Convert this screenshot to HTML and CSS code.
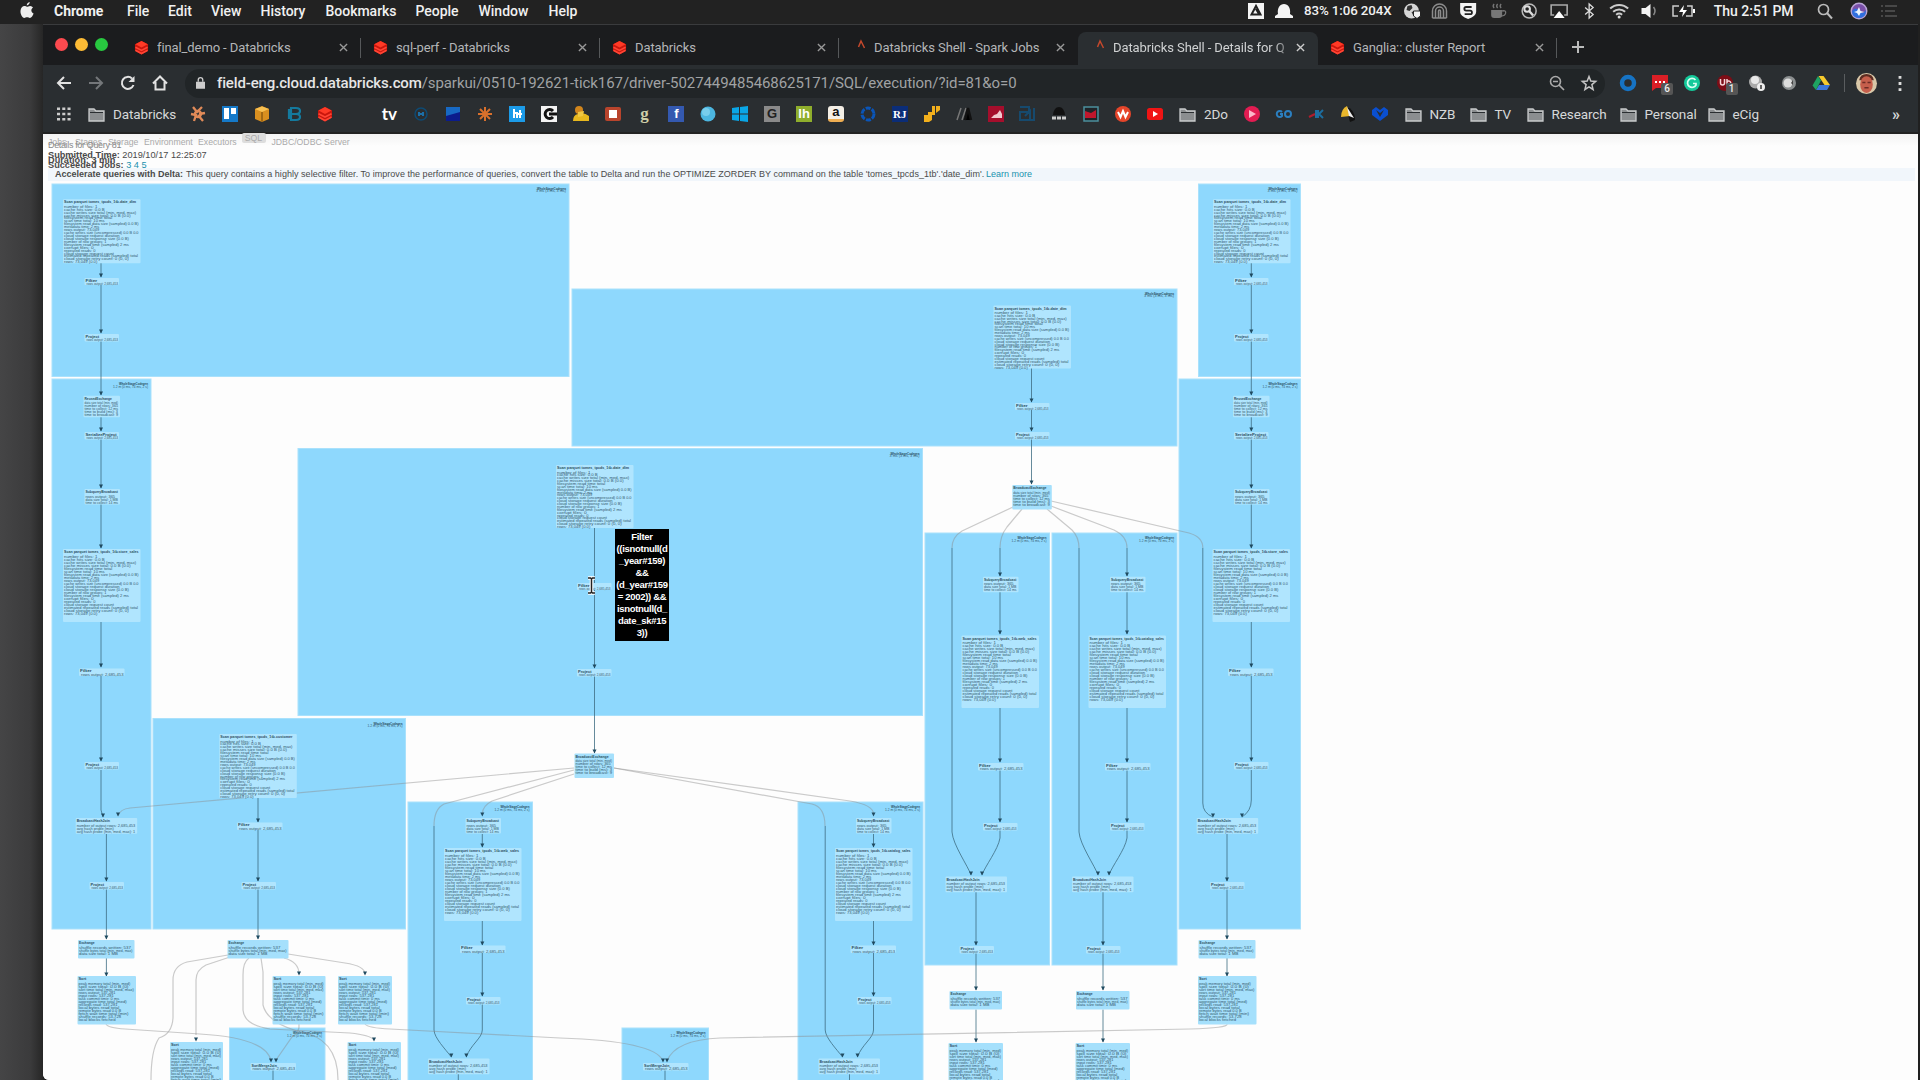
FILE: index.html
```html
<!DOCTYPE html>
<html lang="en">
<head>
<meta charset="utf-8">
<title>Databricks Shell - Details for Query 81</title>
<link rel="stylesheet" href="styles.css">
</head>
<body>
<svg class="defs" width="0" height="0" aria-hidden="true">
  <symbol id="bricks" viewBox="0 0 16 16"><path fill="#c9160d" d="M1 4.500 8 1l7 3.500v7L8 15.500l-7-4z"/><path fill="#ff3a26" d="M1.500 4.500 8 1l6.500 3.500L8 8z"/><path fill="none" stroke="#ff4534" stroke-width="1.800" d="m1.500 7.700 6.500 3.400 6.500-3.400M1.500 11 8 14.500l6.500-3.500"/></symbol>
  <symbol id="folder" viewBox="0 0 17 15"><path fill="#8b8e90" stroke="#c9cbcc" stroke-width="1.300" d="M1 2h5l2 2h8v10H1z"/><path stroke="#2a2e31" stroke-width="1" d="M2 5.500h13"/></symbol>
  <symbol id="close" viewBox="0 0 10 10"><path d="m1 1 8 8m0-8-8 8" fill="none" stroke="currentColor" stroke-width="1.500"/></symbol>
  <symbol id="spark" viewBox="0 0 10 10"><path d="m1.500 7 2.500-6 3.500 7" fill="none" stroke="#c4482c" stroke-width="1.500"/></symbol>
</svg>

<header class="menubar">
  <svg class="apple" viewBox="0 0 14 17"><path fill="#eee" d="M9.700 0c.1 1.700-1.200 3.300-2.900 3.400C6.600 1.800 8.100.2 9.700 0zM7 4.700c.8 0 1.700-.8 3.200-.8 1.200.1 2.200.6 2.800 1.500-2.400 1.600-2.100 4.900.6 6-.7 1.900-2.100 4.500-3.700 4.500-1.100 0-1.500-.7-2.800-.7s-1.800.7-2.800.7C2.200 15.900.2 11.900.5 8.800.8 5.900 2.500 4.100 4.500 4.100c1 0 1.700.6 2.500.6z"/></svg>
  <nav class="menus"><b>Chrome</b><span>File</span><span>Edit</span><span>View</span><span>History</span><span>Bookmarks</span><span>People</span><span>Window</span><span>Help</span></nav>
  <div class="status">
    <svg class="w-drive" viewBox="0 0 16 16"><path fill="#f4f4f4" d="M0 0h16v16H0z"/><path fill="none" stroke="#222" stroke-width="2" d="M8 3 3.500 11.500h9zM8 6l3 5"/></svg>
    <svg class="w-hat" viewBox="0 0 18 16"><path fill="#f4f4f4" d="M3 11C2 5 5 1 9 1s7 4 6 10l3 2v2H0v-2z"/></svg>
    <span class="stat">83% 1:06 204X</span>
    <svg class="w-27" viewBox="0 0 18 16"><circle cx="8" cy="8" r="7.500" fill="#d6d6d6"/><path fill="#333" d="m4 3 4-1 1 3-3 3-3-1zM8 9l4-1-2 5z"/><path fill="#f2f2f2" stroke="#222" d="M10 8h7v5l-3.500 2.500L10 13z"/></svg>
    <svg class="w-27" viewBox="0 0 18 16"><path fill="none" stroke="#8c8c8c" stroke-width="1.500" d="M2 15V8a7 7 0 0 1 14 0v7M5 15V8a4 4 0 0 1 8 0v7M8 15V8a1 1 0 0 1 2 0v7M2 15h14"/></svg>
    <svg class="w-30" viewBox="0 0 18 16"><path fill="#f4f4f4" d="M1 0h16v9q0 4-8 7-8-3-8-7z"/><path fill="none" stroke="#222" stroke-width="1.800" d="M12.500 4H7a1.800 1.800 0 0 0 0 3.600h4a1.800 1.800 0 0 1 0 3.600H5.500"/></svg>
    <svg class="w-30" viewBox="0 0 18 16"><path fill="#777" d="M2 7h11v5q0 3-3 3H5q-3 0-3-3z"/><path fill="none" stroke="#777" stroke-width="1.300" d="M13 8q4-1 3.500 2T12 13M5 5q-2-2 0-4M8.500 5q-2-2 0-4M12 5q-2-2 0-4"/></svg>
    <svg class="w-30" viewBox="0 0 18 16"><circle cx="9" cy="8" r="7" fill="none" stroke="#bbb" stroke-width="1.500"/><circle cx="7" cy="6" r="2.800" fill="none" stroke="#ddd" stroke-width="2"/><path stroke="#ddd" stroke-width="2.400" d="m9 8 4 4.500"/></svg>
    <svg class="w-30" viewBox="0 0 18 16"><path fill="none" stroke="#aaa" stroke-width="1.600" d="M4 12H1V2h16v10h-3"/><path fill="#fff" d="m9 8 5.500 7h-11z"/></svg>
    <svg class="w-30" viewBox="0 0 18 16"><path fill="none" stroke="#ddd" stroke-width="1.300" d="m5 4.500 8 7-4 3.500V1l4 3.500-8 7"/></svg>
    <svg class="w-30 wide" viewBox="0 0 20 16"><path fill="none" stroke="#ccc" stroke-width="2" d="M1 5.500a13 13 0 0 1 18 0M4 8.700a9 9 0 0 1 12 0M7 11.700a5 5 0 0 1 6 0"/><circle cx="10" cy="14" r="1.500" fill="#ddd"/></svg>
    <svg class="w-27" viewBox="0 0 18 16"><path fill="#f4f4f4" d="M2 5h4l5-4v14l-5-4H2z"/><path fill="none" stroke="#888" stroke-width="1.500" d="M14 4q3 4 0 8"/></svg>
    <svg class="w-batt" viewBox="0 0 24 16"><path fill="none" stroke="#ccc" stroke-width="1.500" d="M8 3H2v10h5M16 3h5v10h-6"/><path fill="#fff" d="m13 2-5 7h4l-1 5 5-7h-4zM22 6h2v4h-2z"/></svg>
    <span class="clock">Thu 2:51 PM</span>
    <svg class="w-find" viewBox="0 0 18 16"><circle cx="7.500" cy="6.500" r="5" fill="none" stroke="#bbb" stroke-width="1.700"/><path stroke="#bbb" stroke-width="2" d="m11 10 5 5.500"/></svg>
    <svg class="w-siri" viewBox="0 0 18 16"><circle cx="9" cy="8" r="8.500" fill="#b9a6d6"/><circle cx="9" cy="8" r="7" fill="#7a4fa8"/><path fill="#2f6fe0" d="M2 8q4-5 7 0t7-1q0 8-7 8t-7-7z"/><path fill="#e9f4ff" d="m9 4 1.500 4 4 1-4 1-1.500 3-2-3-3-1 3-1z"/></svg>
    <svg class="w-list" viewBox="0 0 18 16"><path stroke="#555" stroke-width="1.700" d="M1 3h2m2 0h12M1 8h2m2 0h10M1 13h2m2 0h12"/></svg>
  </div>
</header>

<main class="window">
  <div class="tabs">
    <div class="lights"><i class="red"></i><i class="amber"></i><i class="green"></i></div>
    <div class="tab"><svg class="fav"><use href="#bricks"/></svg><span>final_demo - Databricks</span><svg class="x"><use href="#close"/></svg></div>
    <div class="tab"><svg class="fav"><use href="#bricks"/></svg><span>sql-perf - Databricks</span><svg class="x"><use href="#close"/></svg></div>
    <div class="tab"><svg class="fav"><use href="#bricks"/></svg><span>Databricks</span><svg class="x"><use href="#close"/></svg></div>
    <div class="tab last"><svg class="fav sp"><use href="#spark"/></svg><span>Databricks Shell - Spark Jobs</span><svg class="x"><use href="#close"/></svg></div>
    <div class="tab active"><svg class="fav sp"><use href="#spark"/></svg><span class="fade">Databricks Shell - Details for Q</span><svg class="x"><use href="#close"/></svg></div>
    <div class="tab"><svg class="fav"><use href="#bricks"/></svg><span>Ganglia:: cluster Report</span><svg class="x"><use href="#close"/></svg></div>
    <svg class="plus" viewBox="0 0 12 12"><path stroke="#bbb" stroke-width="2" d="M6 0v12M0 6h12"/></svg>
  </div>

  <div class="toolbar">
    <div class="navs">
      <svg viewBox="0 0 16 16"><path fill="none" stroke="#e2e2e2" stroke-width="2" d="M15 8H2m6-6L2 8l6 6"/></svg>
      <svg viewBox="0 0 16 16"><path fill="none" stroke="#74777a" stroke-width="2" d="M1 8h13M8 2l6 6-6 6"/></svg>
      <svg viewBox="0 0 16 16"><path fill="none" stroke="#e2e2e2" stroke-width="2" d="M13.500 10A6 6 0 1 1 12 3.500"/><path fill="#e2e2e2" d="M14.500 1v6h-6z"/></svg>
      <svg viewBox="0 0 16 16"><path fill="none" stroke="#e2e2e2" stroke-width="2" d="M1 8.500 8 1.500l7 7M3.500 7v7.500h9V7"/></svg>
    </div>
    <div class="address">
      <svg class="lock" viewBox="0 0 10 13"><path fill="#ccc" d="M0 5h10v8H0z"/><path fill="none" stroke="#ccc" stroke-width="1.500" d="M2.500 5V3a2.500 2.500 0 0 1 5 0v2"/></svg>
      <span class="url"><b>field-eng.cloud.databricks.com</b><span class="path">/sparkui/0510-192621-tick167/driver-5027449485468625171/SQL/execution/?id=81&amp;o=0</span></span>
      <svg class="act" viewBox="0 0 16 16"><circle cx="6.500" cy="6.500" r="5" fill="none" stroke="#aaa" stroke-width="1.600"/><path stroke="#aaa" stroke-width="1.700" d="m10 10 5 5M4 6.500h5"/></svg>
      <svg class="act" viewBox="0 0 16 16"><path fill="none" stroke="#c4c4c4" stroke-width="1.500" d="m8 1.500 1.800 4.600 4.900.3-3.800 3.200 1.200 4.900L8 11.800l-4.100 2.700 1.200-4.900L1.300 6.400l4.900-.3z"/></svg>
    </div>
    <div class="exts">
      <svg viewBox="0 0 18 18"><circle cx="9" cy="9" r="6" fill="none" stroke="#1673c4" stroke-width="4.500"/></svg>
      <span class="ext"><svg viewBox="0 0 18 18"><path fill="#da1f26" d="M1 1h16v13H5l-4 3z"/><path stroke="#fff" stroke-width="2" stroke-dasharray="2 2" d="M4 8h10"/></svg><em>6</em></span>
      <svg viewBox="0 0 18 18"><circle cx="9" cy="9" r="8" fill="#14c99a"/><path fill="none" stroke="#d8fff2" stroke-width="1.700" d="M12.500 6A4.500 4.500 0 1 0 13 11V9.500h-3"/></svg>
      <span class="ext"><svg viewBox="0 0 18 18"><circle cx="9" cy="9" r="8" fill="#7d0d16"/><path fill="none" stroke="#f5d6d8" stroke-width="1.500" d="M4.500 5v4q0 2 2 2t2-2V5M11 5v6m0-3a2 2 0 1 1 0 2"/></svg><em>1</em></span>
      <svg viewBox="0 0 18 18"><circle cx="7.500" cy="8" r="6.500" fill="#aaa"/><circle cx="7" cy="6" r="4" fill="#e8e8e8"/><circle cx="13" cy="13" r="4" fill="#eee"/><path stroke="#333" stroke-width="1.500" d="M13 11v4"/></svg>
      <svg viewBox="0 0 18 18"><circle cx="9" cy="9" r="7" fill="#8b8f90"/><circle cx="8" cy="9" r="4.500" fill="#ddd"/><path fill="#444" d="m11 9 2-3v5z"/></svg>
      <svg viewBox="0 0 18 18"><path fill="#3b77db" d="M4 16h11l3-5H7z"/><path fill="#f7ca2d" d="M6.500 2h5L18 11h-5.500z"/><path fill="#1ea362" d="m6 2 3 4.500L4 16l-3.500-4.500z"/></svg>
      <i class="sep"></i>
      <svg class="avatar" viewBox="0 0 20 20"><circle cx="10" cy="10" r="10" fill="#d8c7a8"/><path fill="#5d2c22" d="M3 7q1-6 7-6t7 6z"/><ellipse cx="10" cy="11" rx="6" ry="8" fill="#c65f4c"/><path stroke="#6e2c25" stroke-width="1.500" d="M6 9h3m2 0h3M8 14h4"/></svg>
      <svg class="dots" viewBox="0 0 4 18"><path stroke="#ddd" stroke-width="3" stroke-dasharray="3 3.500" d="M2 1v16"/></svg>
    </div>
  </div>

  <div class="bookmarks">
    <span class="bm apps"><svg viewBox="0 0 16 16"><path stroke="#ccc" stroke-width="3" stroke-dasharray="3.500 2.500" d="M0 2h16M0 8h16M0 14h16"/></svg></span>
    <span class="dir d0"><svg><use href="#folder"/></svg>Databricks</span>
    <span class="bm"><svg viewBox="0 0 16 16"><g fill="none" stroke="#e08a58" stroke-width="2.300"><path d="m3 1 4 5 5-5M1 8l5 1-2 6M8 9l5 6M15 7l-6 1"/><circle cx="8" cy="8" r="3"/></g></svg></span>
    <span class="bm"><svg viewBox="0 0 16 16"><path fill="#1579c8" d="M0 0h16v16H0z"/><path fill="#fff" d="M2 2h5v11H2zm7 0h5v6H9z"/></svg></span>
    <span class="bm"><svg viewBox="0 0 16 16"><path fill="#d98f1f" d="m1 3 7-3 7 3v10l-7 3-7-3z"/><path fill="#f7c052" d="m1 3 7-2.500L15 3 8 6z"/><path stroke="#6b4308" d="M8 6v9.500"/></svg></span>
    <span class="bm"><svg viewBox="0 0 16 16"><path fill="none" stroke="#147a9e" stroke-width="2.200" d="M5 2h5q4 0 4 3t-4 3q4 0 4 3t-4 3H5zM6 8h4M3 3v10"/></svg></span>
    <span class="bm"><svg><use href="#bricks"/></svg></span>
    <span class="bm"></span>
    <span class="bm"><b class="tv">tv</b></span>
    <span class="bm"><svg viewBox="0 0 16 16"><circle cx="8" cy="8" r="6" fill="none" stroke="#0e4a73" stroke-width="1.500"/><path stroke="#1c6fa8" stroke-width="2" d="M6 6v4m4-4v4M6 8h4"/></svg></span>
    <span class="bm"><svg viewBox="0 0 16 16"><path fill="#0b1c8c" d="M1 1h14v14H1z"/><path fill="#1769c4" d="M1 1h14v5L1 10z"/></svg></span>
    <span class="bm"><svg viewBox="0 0 16 16"><path stroke="#d9702c" stroke-width="2" d="M8 1v14M1 8h14M3 3l10 10m0-10L3 13"/></svg></span>
    <span class="bm"><svg viewBox="0 0 16 16"><path fill="#1c9be8" d="M0 0h16v16H0z"/><path fill="none" stroke="#fff" stroke-width="2" d="M5 3v9M5 7h3v5M11 4v8M8 8h5"/></svg></span>
    <span class="bm"><svg viewBox="0 0 16 16"><path fill="#f4f4f4" d="M0 0h16v16H0z"/><path fill="none" stroke="#111" stroke-width="3" d="M12 5A4.500 4.500 0 1 0 12 11M8 8h8"/></svg></span>
    <span class="bm"><svg viewBox="0 0 16 16"><path fill="#e8b81e" d="M0 15q0-6 5-7 6-2 11 2v5z"/><circle cx="6" cy="4" r="4" fill="#d2861c"/><path fill="#f1c842" d="m5 6 6-1-1 5-5 1z"/></svg></span>
    <span class="bm"><svg viewBox="0 0 16 16"><rect y="1" width="16" height="14" rx="2" fill="#b8442c"/><path fill="#fff" d="M4 4h8v8H4z"/></svg></span>
    <span class="bm"><b class="g">g</b></span>
    <span class="bm"><b class="sq fb">f</b></span>
    <span class="bm"><svg viewBox="0 0 16 16"><circle cx="8" cy="8" r="7.500" fill="#4cb6e0"/><circle cx="6" cy="6" r="4" fill="#78cdec"/></svg></span>
    <span class="bm"><svg viewBox="0 0 16 16"><path fill="#0aa6e6" d="m0 2 7-1v6.500H0zM8 1l8-1v7.500H8zM0 8.500h7V15l-7-1zm8 0h8V16l-8-1z"/></svg></span>
    <span class="bm"><b class="sq gg">G</b></span>
    <span class="bm"><b class="sq hh">lh</b></span>
    <span class="bm"><b class="sq am">a</b></span>
    <span class="bm"><svg viewBox="0 0 16 16"><circle cx="8" cy="8" r="6" fill="none" stroke="#0a55b8" stroke-width="3" stroke-dasharray="5 1.300"/></svg></span>
    <span class="bm"><b class="sq rj">RJ</b></span>
    <span class="bm"><svg viewBox="0 0 16 16"><path fill="#f3b01c" d="M0 9h4v-3h4v8l-3 2H0zM8 0h3v9H8zm4 0h4v4l-4 3z"/></svg></span>
    <span class="bm"><svg viewBox="0 0 16 16"><path stroke="#777" stroke-width="1.500" d="M1 14 5 2M6 14l4-12"/><path stroke="#111" stroke-width="2.500" d="m9 14 3-12 3 12"/></svg></span>
    <span class="bm"><svg viewBox="0 0 16 16"><path fill="#a50e2c" d="M0 0h16v16H0z"/><path fill="#f1c9cf" d="M3 12h11V8l-2-4-3 4-3 1z"/></svg></span>
    <span class="bm"><svg viewBox="0 0 16 16"><path fill="none" stroke="#164a6e" stroke-width="2" d="M1 1h9v5H1v8h14V2M6 10l5-5v9"/></svg></span>
    <span class="bm"><svg viewBox="0 0 16 16"><path fill="#111" d="M2 9q1-8 6-8t6 8z"/><path stroke="#ccc" stroke-width="3" stroke-dasharray="4 1" d="M1 12h14"/></svg></span>
    <span class="bm"><svg viewBox="0 0 16 16"><path fill="#202428" stroke="#4b8f9c" stroke-width="1.500" d="M1 1h14v14H1z"/><path fill="#c0162c" d="M2 5l6 2 5-3v8H2z"/></svg></span>
    <span class="bm"><svg viewBox="0 0 16 16"><circle cx="8" cy="8" r="8" fill="#e5452a"/><path fill="none" stroke="#fff" stroke-width="2" d="m3 6 2.500 5L8 5l2.500 6L13 6"/></svg></span>
    <span class="bm"><svg viewBox="0 0 16 16"><rect y="2" width="16" height="12" rx="2.500" fill="#f01414"/><path fill="#fff" d="m6 5 5 3-5 3z"/></svg></span>
    <span class="dir d1"><svg><use href="#folder"/></svg>2Do</span>
    <span class="bm"><svg viewBox="0 0 16 16"><circle cx="8" cy="8" r="8" fill="#e21c52"/><path fill="#fbb8ca" d="m5 4 7 4-7 4z"/></svg></span>
    <span class="bm"><svg viewBox="0 0 16 16"><path fill="none" stroke="#2b7fc0" stroke-width="2" d="M6 6a3 3 0 1 0 0 4V8H4"/><circle cx="12" cy="8" r="3" fill="none" stroke="#2b7fc0" stroke-width="2"/></svg></span>
    <span class="bm"><svg viewBox="0 0 16 16"><path stroke="#b01c2c" stroke-width="2" d="m1 11 6-3"/><path fill="none" stroke="#1d6ea0" stroke-width="2" d="M8 4v8m2-8v8m5-8-4 4 4 4"/></svg></span>
    <span class="bm"><svg viewBox="0 0 16 16"><path fill="#111" d="M6 1q9 2 9 13l-5 2z"/><path fill="#e9b72b" d="M1 11Q1 3 7 0l3 10z"/><path fill="#eee" d="m7 1 7 11-5-2z"/></svg></span>
    <span class="bm"><svg viewBox="0 0 16 16"><path fill="#0a4fd0" d="m0 4 4-3 4 3 4-3 4 3v5l-8 6-8-6z"/><path fill="#2a2e31" d="m4 4 4 3 4-3-4 7z"/></svg></span>
    <span class="dir d2"><svg><use href="#folder"/></svg>NZB</span>
    <span class="dir d3"><svg><use href="#folder"/></svg>TV</span>
    <span class="dir d4"><svg><use href="#folder"/></svg>Research</span>
    <span class="dir d5"><svg><use href="#folder"/></svg>Personal</span>
    <span class="dir d6"><svg><use href="#folder"/></svg>eCig</span>
    <b class="more">»</b>
  </div>

  <div class="page">
    <nav class="sparknav"><span>Jobs</span><span>Stages</span><span>Storage</span><span>Environment</span><span>Executors</span><span class="sql">SQL</span><span>JDBC/ODBC Server</span></nav>
    <div class="heading">Details for Query 81</div>
    <div class="facts"><div><b>Submitted Time:</b> 2019/10/17 12:25:07</div><div><b>Duration: 3 min</b></div><div><b>Succeeded Jobs:</b> <a>3</a> <a>4</a> <a>5</a></div></div>
    <div class="alert"><span class="lead">Accelerate queries with Delta:</span> <span class="msg">This query contains a highly selective filter. To improve the performance of queries, convert the table to Delta and run the OPTIMIZE ZORDER BY command on the table 'tomes_tpcds_1tb'.'date_dim'.</span> <a>Learn more</a></div>
    <svg class="graph" id="graph" viewBox="43 182 1875 898" width="1875" height="898"></svg>
    <div class="tooltip">Filter<br>((isnotnull(d<br>_year#159)<br>&amp;&amp;<br>(d_year#159<br>= 2002)) &amp;&amp;<br>isnotnull(d_<br>date_sk#15<br>3))</div>
  </div>
</main>
<script src="graph.js"></script>
</body>
</html>
```
FILE: styles.css
```css
* { box-sizing: border-box; }
body { margin: 0; width: 1920px; height: 1080px; overflow: hidden; background: linear-gradient(90deg, #454546, #3b3b3c 70%, #262626 100%) 0 0 / 43px 100% no-repeat #202020; font-family: Roboto, "Liberation Sans", sans-serif; color: #ddd; }
svg { display: block; flex: none; overflow: visible; }
.defs { position: absolute; }
.menubar { height: 24px; background: #222; display: flex; align-items: center; padding: 0 0 3px 20px; font-size: 14px; font-weight: 500; color: #f0f0f0; white-space: nowrap; }
.apple { width: 14px; height: 17px; margin-right: 20px; }
.menus { display: grid; grid-template-columns: 73px 41px 43px 49.500px 65px 90px 63px 70px 60px; width: 1194px; letter-spacing: -.02px; }
.menus b { font-weight: 700; }
.status { display: flex; align-items: center; }
.status svg { height: 16px; }
.w-drive { width: 16px; margin-right: 11px; }
.w-hat { width: 18px; margin-right: 11px; }
.stat { width: 95px; font-size: 13.300px; letter-spacing: -.1px; }
.status .w-27 { width: 27px; }
.status .w-30 { width: 30.300px; }
.w-batt { width: 24px; margin: 0 19px 0 9px; }
.clock { width: 102px; font-size: 14px; }
.w-find { width: 18px; margin-right: 16px; }
.w-siri { width: 18px; margin-right: 12px; }
.w-list { width: 18px; }

.window { margin-left: 43px; width: 1875px; height: 1056px; background: #fdfdfd; position: relative; border-bottom-left-radius: 6px; overflow: hidden; }
.tabs { height: 41px; background: #1b1c1e; border-top: 1px solid #3a3b3d; display: flex; align-items: stretch; font-size: 13px; letter-spacing: -.1px; color: #b4b6b8; }
.lights { width: 79px; display: flex; gap: 7px; padding: 12.500px 0 0 12px; }
.lights i { width: 13px; height: 13px; border-radius: 50%; }
.red { background: #fc4a4f; } .amber { background: #fdbb35; } .green { background: #28c840; }
.tab { width: 239px; display: flex; align-items: center; padding: 5px 12px 0; position: relative; white-space: nowrap; }
.tab::after { content: ""; width: 1px; height: 20px; background: #56585a; position: absolute; right: 0; top: 13px; }
.tab.active::after, .tab.last::after { display: none; }
.tab span { flex: 1; overflow: hidden; }
.fav { width: 15px; height: 15px; margin-right: 8px; }
.fav.sp { width: 10px; height: 12px; margin: -6px 7px 0 6px; }
.x { width: 9px; height: 9px; color: #999; margin-right: 1px; }
.tab.active { background: #2a2e31; width: 240px; border-radius: 8px 8px 0 0; margin-top: 7px; padding: 0 12px 2px; color: #d0d2d3; }
.tab.active .x { color: #ccc; }
.fade { -webkit-mask-image: linear-gradient(90deg, #000 88%, transparent); mask-image: linear-gradient(90deg, #000 88%, transparent); }
.plus { width: 12px; height: 12px; margin: 16px 0 0 15px; }

.toolbar { height: 36px; background: #2a2e31; display: flex; align-items: center; padding-left: 13px; }
.navs { display: flex; gap: 16px; width: 129px; }
.navs svg { width: 16px; height: 16px; }
.address { width: 1420px; height: 29px; background: #212527; border-radius: 15px; display: flex; align-items: center; padding: 0 8px 0 11px; }
.lock { width: 9px; height: 12px; margin-right: 12px; }
.url { flex: 1; font-size: 15px; color: #a0a2a4; white-space: nowrap; }
.url b { font-weight: 500; color: #e6e6e6; letter-spacing: -.14px; }
.path { letter-spacing: -.07px; }
.act { width: 16px; height: 16px; margin-left: 16px; }
.exts { display: flex; align-items: center; gap: 14.200px; padding-left: 14px; }
.exts svg { width: 18px; height: 18px; }
.ext { position: relative; }
.ext em { position: absolute; left: 10px; top: 9px; width: 12px; height: 12px; background: #555; color: #eee; font: 500 10px/12px Roboto, sans-serif; text-align: center; border-radius: 2px; }
.sep { width: 1px; height: 18px; background: #5a5d5f; margin-right: -4px; }
.exts .avatar { width: 21px; height: 21px; }
.exts .dots { width: 4px; height: 17px; margin-left: 7px; }

.bookmarks { height: 33px; background: #2a2e31; border-bottom: 2px solid #222; display: flex; align-items: center; padding: 0 0 5px 5px; font-size: 13.500px; letter-spacing: -.1px; color: #d6d8d9; white-space: nowrap; }
.bm { width: 31.920px; display: flex; justify-content: center; }
.bm svg { width: 16px; height: 16px; }
.apps svg { width: 14px; height: 14px; }
.dir { display: flex; align-items: center; gap: 8px; padding-left: 8px; }
.dir svg { width: 17px; height: 15px; }
.d0 { width: 102px; } .d1 { width: 65px; } .d2 { width: 65px; } .d3 { width: 57px; } .d4 { width: 93px; } .d5 { width: 88px; }
.d2, .d3, .d4, .d5, .d6 { padding-left: 9px; }
.more { margin-left: auto; padding-right: 18px; font-size: 16px; }
.tv { font: 700 17px/20px Lato, sans-serif; color: #fff; }
.g { font: 700 17px/20px "Liberation Serif", serif; color: #cfcfa8; }
.sq { width: 16px; height: 16px; text-align: center; font: 700 13px/16px "Liberation Sans", sans-serif; letter-spacing: 0; color: #fff; }
.fb { background: #3459b0; } .gg { background: #8a8a8a; color: #222; } .hh { background: #8fae2c; }
.am { background: #f4efe6; color: #111; border-radius: 3px; border-bottom: 3px solid #efae52; line-height: 12px; } .rj { background: #0b2d78; font: 700 11px/16px "Liberation Serif", serif; }

.page { height: 946px; background: linear-gradient(#f3f3f3, #fdfdfd 12px); color: #4a4a4a; font-family: "Liberation Sans", sans-serif; font-size: 9.200px; position: relative; }
.sparknav { height: 16px; padding: 3px 0 0 5px; display: grid; grid-template-columns: 27px 33px 36px 54px 43.500px 30px 90px; color: #aaa; font-size: 8.700px; line-height: 11px; white-space: nowrap; }
.sparknav .sql { background: #ddd; margin: -4px 6px 0 0; height: 10px; text-align: center; border-radius: 2px; line-height: 10px; }
.heading { height: 11px; margin-top: -10px; padding-left: 5px; line-height: 11px; color: #8a8a8a; font-size: 9px; letter-spacing: -.35px; }
.facts { height: 15px; padding-left: 5px; }
.facts div { height: 5px; line-height: 9px; }
.alert { margin: 2px 3px 0 5px; height: 13px; background: #f1f6fb; padding-left: 7px; line-height: 13px; font-size: 9px; white-space: nowrap; display: flex; gap: 3px; }
.lead { font-weight: 700; width: 128px; }
.msg { width: 797px; letter-spacing: .035px; }
a { color: #1a92ae; }
.graph { margin-top: 1px; }
.cluster { fill: #8ed8fd; stroke: #a9e1fc; stroke-width: 1; }
.node { fill: #b0e5fe; }
.outer { fill: #a5e0fc; }
.edge { fill: none; stroke: #3d6c82; stroke-width: .8; }
.pale { fill: none; stroke: #8c8c8c; stroke-opacity: .45; stroke-width: 1.200; }
.tip { fill: #1f4a60; }
.label { font: 3.900px "Liberation Sans", sans-serif; fill: #345a6e; }
.name { font: 700 3.900px "Liberation Sans", sans-serif; fill: #2c4f62; }
.cursor { fill: none; stroke: #222; stroke-width: 1.500; }
.halo { fill: none; stroke: #fff; stroke-width: 3.500; }
.tooltip { position: absolute; left: 572px; top: 395px; width: 54px; height: 112px; padding-top: 2px; background: #000; color: #fff; font: 700 9.500px/12px "Liberation Sans", sans-serif; text-align: center; white-space: nowrap; letter-spacing: -.3px; }
```
FILE: graph.js
```js
// Query plan drawn as SVG: stage clusters, operator nodes, and the edges between them.
const svg = document.getElementById('graph');
const out = [];

const clusters = [
  [52, 184, 569, 376.5], [52, 379, 151, 929], [153, 718.5, 405.5, 929], [298, 448.5, 922.5, 715.5],
  [572, 289, 1177, 446], [1198.5, 184, 1300.5, 376.5], [1179, 379, 1300.5, 929],
  [408, 802, 532.5, 1090], [798, 802, 923, 1090], [925, 533, 1049.5, 965], [1052, 533, 1177, 965],
  [229.5, 1028, 325, 1090], [622, 1028, 708.5, 1090]
];

const details = {
  scan: ['number of files: 1', 'cache hits size: 0.0 B', 'cache writes size total (min, med, max)', 'cache misses size total: 0.0 B (0.0)', 'filesystem read time total', 'scan time total: 10 ms', 'filesystem read data size (sampled) 0.0 B)', 'metadata time: 2 ms', 'rows output: 73,049', 'cache writes size (uncompressed) 0.0 B 0.0', 'cloud storage request duration', 'cloud storage response size (0.0 B)', 'number of row groups: 1', 'filesystem read time (sampled) 2 ms', 'corrupt files: 0', 'repeated reads: 0', 'cloud storage request count', 'estimated repeated reads (sampled) total', 'cloud storage retry count: 0 (0, 0)', 'rows: 73,049 (0.0)'],
  exch: ['data size total (min, med)', 'number of rows: 365', 'time to collect: 12 ms', 'time to build (ms): 3', 'time to broadcast: 9'],
  small: ['rows output: 365', 'data size total: 1 MB', 'time to collect: 14 ms'],
  wide: ['shuffle records written: 537', 'shuffle bytes total (min, med, max)', 'data size total: 1 MB'],
  join: ['number of output rows: 2,685,453', 'avg hash probe (min)', 'avg hash probe (min, med, max): 1'],
  sort: ['peak memory total (min, med)', 'spill size total: 0.0 B (0)', 'sort time total (min, med, max)', 'rows output: 537,281', 'input rows: 537,281', 'task commit time: 0 ms', 'aggregate time total (med)', 'records read: 537,281', 'local bytes read total', 'remote bytes read 0.0 B', 'fetch wait time total (min)', 'shuffle records: 53,728', 'local blocks fetched']
};
const esc = s => s.replace(/&/g, '&amp;').replace(/</g, '&lt;');
const text = (cls, x, y, s, len) => out.push(`<text class="${cls}" x="${x}" y="${y}"${len ? ` textLength="${len}" lengthAdjust="spacingAndGlyphs"` : ''}>${esc(s)}</text>`);

clusters.forEach(([a, b, c, d], i) => {
  out.push(`<rect class="cluster" x="${a}" y="${b}" width="${c - a}" height="${d - b}"/>`);
  text('name', c - 32, b + 6, 'WholeStageCodegen', 29);
  if (![0, 3, 4, 5].includes(i)) text('label', c - 38, b + 8.5, '1.2 m (0 ms, 74 ms, 2 s)', 35);
  else text('label', c - 33, b + 8, '3 ms (3 ms, 3 ms)', 30);
});

// The last two numbers of the path data are where the arrow head sits.
function edge(d, cls = 'edge') {
  out.push(`<path class="${cls}" d="${d}"/>`);
  const [x, y] = d.match(/-?[\d.]+/g).slice(-2).map(Number);
  out.push(`<path class="tip" d="M${x - 2} ${y - 3.500}h4l-2 4z"/>`);
}
const down = (x, ...ys) => { for (let i = 0; i < ys.length; i += 2) edge(`M${x} ${ys[i]}V${ys[i]}L${x} ${ys[i + 1]}`); };

down(101, 263, 277, 285, 333, 341, 395, 417, 431, 439, 488, 504, 548, 622, 667, 676, 761);
edge('M101 770V810L103 817');
down(106.4, 834, 881, 889, 939, 958, 976);
down(258, 798, 822, 830, 881, 889, 939);
down(1031.5, 368, 402, 410, 431, 439, 484);
out.push('<path class="edge" d="M594.5 528V583"/>');
down(594.5, 589, 668, 676, 753);
down(1251.3, 263, 277, 285, 333, 341, 395, 417, 431, 439, 488, 504, 548, 622, 667, 676, 761);
down(1227, 834, 881, 889, 939, 958, 976);
[482.3, 873.5].forEach(x => {
  down(x, 834, 847, 921, 945, 953, 996);
  edge(`M${x} 1004V1030C${x} 1038 ${x - 12} 1045 ${x - 16} 1057`);
  edge(`M${x - 48.3} 826V1030C${x - 48} 1038 ${x - 37} 1049 ${x - 31} 1057`);
  edge(`M${x - 24} 1074L${x - 24} 1090`);
});
[1000, 1127].forEach(x => {
  down(x, 592, 634, 708, 762, 770, 822);
  edge(`M${x} 830V838C${x - 2} 850 ${x - 15} 866 ${x - 18} 875`);
  out.push(`<path class="edge" d="M${x - 48} 548V565"/>`);
  edge(`M${x - 48} 565V832C${x - 47} 845 ${x - 32} 866 ${x - 29} 875`);
  down(x - 24, 892, 945, 953, 990, 1009.5, 1042);
});
edge('M1251.3 770V800Q1251.3 811 1242 817');
edge('M1202.8 548V803Q1202.8 813 1213 817');
down(1000, 548, 576); down(1127, 548, 576);
['M1013 507 962 531Q952 537 952 548', 'M1022 509 1007 527Q1000 536 1000 548', 'M1047 509 1072 530Q1079 537 1079 548', 'M1051 506 1114 530Q1127 536 1127 548', 'M1051 501 1189 533Q1203 537 1202.8 548',
 'M574 768 130 808Q120 809 118 816', 'M574 770 444 804Q434 809 434 826', 'M574 774 492 801Q482.300 806 482.300 814', 'M614 768 812 804Q825 807 825 826', 'M614 768 850 801Q873.500 805 873.500 814',
 'M228 955 187 962Q173 966 173 980V1018Q172 1034 159 1038Q151 1050 151 1080', 'M230 957 206 965Q196 970 196 980V1035', 'M249 958Q243 962 243 975V1010Q244 1025 270 1029L350 1033Q370 1035 374 1040', 'M261 958 263 972V1005Q267 1022 297 1031Q338 1037 338 1080',
 'M284 958Q299 962 299 974', 'M288 954 345 963Q365 966 365 974', 'M106 1024Q108 1028 125 1029L200 1034Q267 1038 271 1061', 'M299 1024Q300 1032 292 1037L276 1060', 'M365 1024Q368 1028 390 1029L560 1038Q655 1041 663 1061', 'M1227 1024Q1228 1028 1190 1029L720 1038Q675 1040 667 1061'
].forEach(d => out.push(`<path class="pale" d="${d}"/>`));
[[118, 816], [482.3, 816], [873.5, 816], [196, 1041], [374, 1041], [299, 975], [365, 975], [271, 1062], [276, 1062], [663, 1062], [667, 1062]].forEach(([x, y]) => out.push(`<path class="tip" d="M${x - 2} ${y - 3.500}h4l-2 4z"/>`));
down(273, 1070, 1090); down(665, 1070, 1090);

function node(x, y, w, h, name, kind, outer) {
  out.push(`<rect class="node${outer ? ' outer' : ''}" x="${x}" y="${y}" width="${w}" height="${h}" rx="1"/>`);
  const big = h > 10;
  text('name', x + 1, y + (big ? 4 : 3.8), name, Math.min(w - 3, name.length * 1.950));
  if (!big) { text('label', x + 2, y + h - .5, 'rows output: 2,685,453', w - 3); return; }
  const lines = details[kind], step = Math.min(3, (h - 8.5) / (lines.length - 1));
  lines.forEach((s, i) => text('label', x + 1, y + 8.5 + i * step, s, Math.min(w - 3, s.length * 1.850)));
}
const scan = (x, y, h, t) => node(x, y, 77.5, h, 'Scan parquet tomes_tpcds_1tb.' + t, 'scan');
scan(63, 199.3, 64, 'date_dim'); scan(556, 465, 63, 'date_dim'); scan(993.5, 305.5, 63, 'date_dim'); scan(1213, 199.3, 64, 'date_dim');
scan(63, 549, 73, 'store_sales'); scan(1212.5, 549, 73, 'store_sales'); scan(219.3, 734, 64, 'customer');
scan(444, 848, 73, 'web_sales'); scan(835, 848, 73, 'catalog_sales'); scan(961.5, 635.5, 72.5, 'web_sales'); scan(1088.5, 635.5, 72.5, 'catalog_sales');

[[84.5, 278], [1234, 278], [577, 583], [1015, 403]].forEach(([x, y]) => node(x, y, 34.5, 7, 'Filter'));
[[79, 668.5], [1228, 668.5], [237, 822.5], [460, 945.5], [850.5, 945.5], [978, 763], [1105, 763]].forEach(([x, y]) => node(x, y, 45.5, 7.5, 'Filter'));
[[84.5, 334], [1234, 334], [577, 669], [1015, 432], [84.5, 762], [1234, 762], [89.5, 882], [1210, 882], [241.5, 882], [466, 997], [857, 997], [983, 823], [1110, 823], [959.5, 946], [1086, 946]].forEach(([x, y]) => node(x, y, 34.5, 7.500, 'Project'));
[[83.5, 395.7], [1233, 395.7]].forEach(([x, y]) => node(x, y, 36.500, 21.500, 'ReusedExchange', 'exch'));
[[84.5, 432], [1234, 432]].forEach(([x, y]) => node(x, y, 34.500, 7.500, 'SerializeProject'));
[[84.5, 489], [1234, 489], [465.5, 818], [856, 818], [983, 576.7], [1110, 576.7]].forEach(([x, y]) => node(x, y, 35.500, 15.500, 'SubqueryBroadcast', 'small'));
[[75.7, 818], [1196.7, 818], [428, 1058.5], [818.5, 1058.5], [945.5, 876.5], [1072, 876.5]].forEach(([x, y]) => node(x, y, 61.500, 15.800, 'BroadcastHashJoin', 'join'));
[[574.5, 753.5], [1012.3, 485]].forEach(([x, y]) => node(x, y, 39.500, 24.500, 'BroadcastExchange', 'exch', true));
[[78, 940, 56.5], [227.5, 940, 61], [1198.5, 940, 57], [949.5, 991, 52.5], [1076, 991, 53.5]].forEach(([x, y, w]) => node(x, y, w, 18.500, 'Exchange', 'wide', true));
[[77.5, 976, 58.5, 'Sort'], [272.5, 976, 53, 'Sort'], [338, 976, 54, 'Sort'], [1198, 976, 58.5, 'Sort'], [170, 1042, 53, 'Sort'], [347.5, 1042, 53.5, 'Sort'], [948.5, 1043, 54.5, 'Sort'], [1075.5, 1043, 54.5, 'Sort']].forEach(([x, y, w, t]) => node(x, y, w, 48.500, t, 'sort', true));
[[250.5, 1063], [643, 1063]].forEach(([x, y]) => node(x, y, 45.500, 7.500, 'SortMergeJoin'));

const beam = 'M588 578h2.500l1 1 1-1h2.500M591.500 579v13M588 593h2.500l1-1 1 1h2.500';
out.push(`<path class="halo" d="${beam}"/><path class="cursor" d="${beam}"/>`);
svg.innerHTML = out.join('');
```
